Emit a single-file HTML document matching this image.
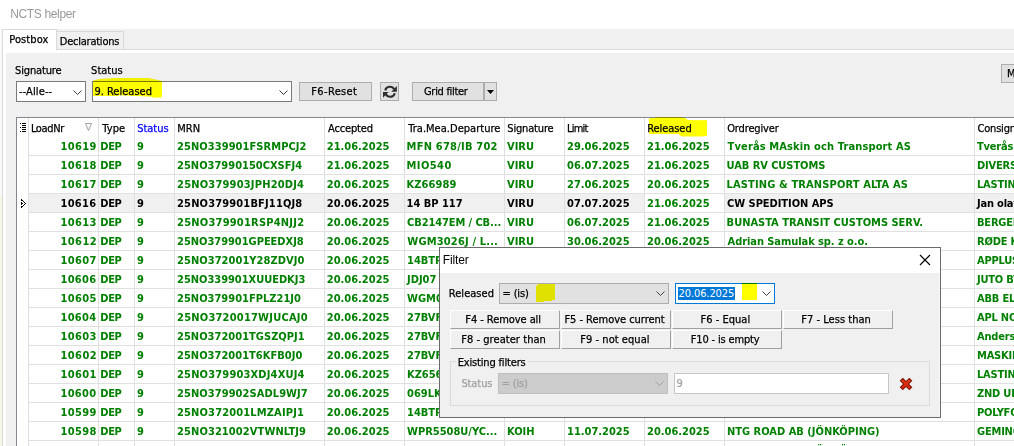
<!DOCTYPE html>
<html><head><meta charset="utf-8"><title>NCTS helper</title>
<style>
html,body{margin:0;padding:0}
body{width:1014px;height:446px;overflow:hidden;position:relative;background:#fff;font-family:"DejaVu Sans Condensed","DejaVu Sans","Liberation Sans",sans-serif;font-size:11px;font-stretch:condensed;color:#000;line-height:13px}
div,span{position:absolute;box-sizing:border-box;white-space:nowrap}
.t{height:13px;line-height:13px;-webkit-text-stroke:0.25px}
.b{font-weight:bold;-webkit-text-stroke:0}
.g{color:#008000}
.s{font-family:"Liberation Sans",sans-serif;font-size:12px;height:15px;line-height:15px;-webkit-text-stroke:0}
.hl{background:#f0f0f0}
.vline{width:1px;background:#e0e0e0}
.hline{height:1px;background:#e0e0e0}
.btn{background:#e1e1e1;border:1px solid #adadad}
.cb{background:#fff;border:1px solid #7a7a7a}
.fb{background:#f0f0f0;border-top:1px solid #fff;border-left:1px solid #fff;border-right:1px solid #a0a0a0;border-bottom:1px solid #a0a0a0}
svg{position:absolute;overflow:visible}
</style></head><body>

<div class="t s" style="left:10.20px;top:7px;letter-spacing:-0.345px;color:#999">NCTS helper</div>
<div style="left:0;top:29px;width:1014px;height:417px;background:#f0f0f0"></div>
<div style="left:0;top:29px;width:2px;height:166px;background:#fafafa"></div>
<div style="left:0;top:195px;width:2px;height:251px;background:#f6f7e8"></div>
<div style="left:2px;top:49px;width:1020px;height:400px;background:#fff;border:1px solid #d9d9d9"></div>
<div style="left:6px;top:53px;width:1010px;height:400px;background:#f0f0f0"></div>
<div style="left:56px;top:31px;width:68px;height:19px;background:#f0f0f0;border:1px solid #d9d9d9;border-left:none"></div>
<div style="left:2px;top:29px;width:55px;height:21px;background:#fff;border:1px solid #d9d9d9;border-bottom:none"></div>
<div class="t" style="left:9.25px;top:33px;letter-spacing:0.100px">Postbox</div>
<div class="t" style="left:59.75px;top:35px;letter-spacing:-0.232px">Declarations</div>
<div class="t" style="left:15.10px;top:64px;letter-spacing:-0.156px">Signature</div>
<div class="t" style="left:91.10px;top:64px;letter-spacing:0.010px">Status</div>
<div class="cb" style="left:16px;top:81px;width:70px;height:21px"></div>
<div class="t" style="left:18.95px;top:85px;letter-spacing:0.121px">--Alle--</div>
<svg style="left:73px;top:90px" width="9" height="6" viewBox="0 0 9 6"><path d="M0.5 0.5 L4.5 4.5 L8.5 0.5" fill="none" stroke="#404040" stroke-width="1"/></svg>
<div class="cb" style="left:92px;top:81px;width:200px;height:21px"></div>
<svg style="left:0;top:0;mix-blend-mode:multiply" width="300" height="120" viewBox="0 0 300 120"><path d="M93 80.4 L99.3 79.1 L115.3 78 L148.1 78 L157.9 80 L162 81.3 L162 96 L161.4 97.4 L153.4 97.8 L151.7 96.8 L119.7 95.2 L118 95.9 L93 95.9 Z" fill="#ffff00"/></svg>
<div class="t" style="left:94.40px;top:85px;letter-spacing:0.005px">9. Released</div>
<svg style="left:279px;top:90px" width="9" height="6" viewBox="0 0 9 6"><path d="M0.5 0.5 L4.5 4.5 L8.5 0.5" fill="none" stroke="#404040" stroke-width="1"/></svg>
<div class="btn" style="left:299px;top:82px;width:73px;height:19px"></div>
<div class="t" style="left:311.25px;top:85px;letter-spacing:0.364px">F6-Reset</div>
<div class="btn" style="left:380px;top:82px;width:19px;height:19px"></div>
<svg style="left:380px;top:82px" width="19" height="19" viewBox="0 0 19 19">
<path d="M5.2 8.4 A4.9 4.9 0 0 1 14.2 7.3" fill="none" stroke="#2e2e2e" stroke-width="2.1"/>
<path d="M16.9 4.0 L16.9 9.7 L11.3 9.7 Z" fill="#2e2e2e"/>
<path d="M14.8 11.2 A4.9 4.9 0 0 1 5.8 12.3" fill="none" stroke="#2e2e2e" stroke-width="2.1"/>
<path d="M3.0 10.0 L3.0 15.7 L8.6 10.0 Z" fill="#2e2e2e"/>
</svg>
<div class="btn" style="left:412px;top:82px;width:72px;height:19px"></div>
<div class="btn" style="left:484px;top:82px;width:13px;height:19px"></div>
<div class="t" style="left:424.00px;top:85px;letter-spacing:-0.300px">Grid filter</div>
<svg style="left:487px;top:90px" width="7" height="4" viewBox="0 0 7 4"><path d="M0 0 L7 0 L3.5 4 Z" fill="#000"/></svg>
<div class="btn" style="left:1001px;top:64px;width:40px;height:19px"></div>
<div class="t" style="left:1007px;top:67px">Mark</div>
<div style="left:16px;top:117px;width:1010px;height:340px;background:#fff;border:1px solid #828790"></div>
<div class="hl" style="left:29px;top:194px;width:990px;height:18px"></div>
<div style="left:645px;top:194px;width:79px;height:18px;background:#fff"></div>
<div class="vline" style="left:28px;top:118px;height:330px"></div>
<div class="vline" style="left:98px;top:118px;height:330px"></div>
<div class="vline" style="left:134px;top:118px;height:330px"></div>
<div class="vline" style="left:174px;top:118px;height:330px"></div>
<div class="vline" style="left:324px;top:118px;height:330px"></div>
<div class="vline" style="left:404px;top:118px;height:330px"></div>
<div class="vline" style="left:504px;top:118px;height:330px"></div>
<div class="vline" style="left:564px;top:118px;height:330px"></div>
<div class="vline" style="left:644px;top:118px;height:330px"></div>
<div class="vline" style="left:724px;top:118px;height:330px"></div>
<div class="vline" style="left:974px;top:118px;height:330px"></div>
<div class="hline" style="left:29px;top:155px;width:990px"></div>
<div class="hline" style="left:29px;top:174px;width:990px"></div>
<div class="hline" style="left:29px;top:193px;width:990px"></div>
<div class="hline" style="left:29px;top:212px;width:990px"></div>
<div class="hline" style="left:29px;top:231px;width:990px"></div>
<div class="hline" style="left:29px;top:250px;width:990px"></div>
<div class="hline" style="left:29px;top:269px;width:990px"></div>
<div class="hline" style="left:29px;top:288px;width:990px"></div>
<div class="hline" style="left:29px;top:307px;width:990px"></div>
<div class="hline" style="left:29px;top:326px;width:990px"></div>
<div class="hline" style="left:29px;top:345px;width:990px"></div>
<div class="hline" style="left:29px;top:364px;width:990px"></div>
<div class="hline" style="left:29px;top:383px;width:990px"></div>
<div class="hline" style="left:29px;top:402px;width:990px"></div>
<div class="hline" style="left:29px;top:421px;width:990px"></div>
<div class="hline" style="left:29px;top:440px;width:990px"></div>
<div class="hline" style="left:29px;top:459px;width:990px"></div>
<svg style="left:20px;top:123px" width="6" height="9" viewBox="0 0 6 9" shape-rendering="crispEdges"><path d="M2 0h4v1h-4zM2 2h4v1h-4zM2 4h4v1h-4zM2 6h4v1h-4zM2 8h4v1h-4zM0 0h1v1h-1zM0 4h1v1h-1zM0 8h1v1h-1z" fill="#000"/></svg>
<svg style="left:85px;top:123px" width="8" height="8" viewBox="0 0 8 8"><path d="M0.5 0.5 L6.5 0.5 L3.5 7.6 Z" fill="none" stroke="#a0a0a0" stroke-width="1"/></svg>
<svg style="left:21px;top:199px" width="5" height="9" viewBox="0 0 5 9" shape-rendering="crispEdges"><path d="M0 0h1v2h-1zM1 1h1v1h-1zM2 2h1v1h-1zM3 3h1v1h-1zM4 4h1v1h-1zM3 5h1v1h-1zM2 6h1v1h-1zM1 7h1v1h-1zM0 7h1v2h-1zM0 4h2v1h-2zM0 3h1v3h-1z" fill="#000"/></svg>
<div class="t" style="left:30.95px;top:122px;letter-spacing:-0.380px">LoadNr</div>
<div class="t" style="left:102.25px;top:122px;letter-spacing:0.133px">Type</div>
<div class="t" style="left:137.30px;top:122px;letter-spacing:-0.050px;color:#0000ff">Status</div>
<div class="t" style="left:177.25px;top:122px;letter-spacing:0.025px">MRN</div>
<div class="t" style="left:328.10px;top:122px;letter-spacing:-0.179px">Accepted</div>
<div class="t" style="left:408.25px;top:122px;letter-spacing:0.025px">Tra.Mea.Departure</div>
<div class="t" style="left:507.30px;top:122px;letter-spacing:-0.169px">Signature</div>
<div class="t" style="left:566.95px;top:122px;letter-spacing:-0.763px">Limit</div>
<svg style="left:600px;top:100px;mix-blend-mode:multiply" width="120" height="50" viewBox="600 100 120 50"><path d="M649 118.4 L659.1 116.9 L681.3 116.9 L685.2 118.2 L687 118.9 L687 120 L707 120.2 L707 135.7 L702.5 136.4 L682.1 136.4 L679.5 135.3 L679 134 L649 134 Z" fill="#ffff00"/></svg>
<div class="t" style="left:647.25px;top:122px;letter-spacing:-0.071px">Released</div>
<div class="t" style="left:727.20px;top:122px;letter-spacing:-0.144px">Ordregiver</div>
<div class="t" style="left:977.5px;top:122px;letter-spacing:-0.2px">Consignee</div>
<div class="t b g" style="left:60.40px;top:140px;letter-spacing:0.412px">10619</div>
<div class="t b g" style="left:100.30px;top:140px;letter-spacing:-0.375px">DEP</div>
<div class="t b g" style="left:137px;top:140px">9</div>
<div class="t b g" style="left:177.05px;top:140px;letter-spacing:0.071px">25NO339901FSRMPCJ2</div>
<div class="t b g" style="left:326.85px;top:140px;letter-spacing:-0.006px">21.06.2025</div>
<div class="t b g" style="left:406.60px;top:140px;letter-spacing:0.223px">MFN 678/IB 702</div>
<div class="t b g" style="left:507px;top:140px">VIRU</div>
<div class="t b g" style="left:567px;top:140px">29.06.2025</div>
<div class="t b g" style="left:647px;top:140px">21.06.2025</div>
<div class="t b g" style="left:727.60px;top:140px;letter-spacing:0.129px">Tverås MAskin och Transport AS</div>
<div class="t b g" style="left:977px;top:140px;letter-spacing:-0.2px">Tverås Maskin</div>
<div class="t b g" style="left:60.40px;top:159px;letter-spacing:0.412px">10618</div>
<div class="t b g" style="left:100.30px;top:159px;letter-spacing:-0.375px">DEP</div>
<div class="t b g" style="left:137px;top:159px">9</div>
<div class="t b g" style="left:177.05px;top:159px;letter-spacing:0.009px">25NO37990150CXSFJ4</div>
<div class="t b g" style="left:326.85px;top:159px;letter-spacing:-0.006px">21.06.2025</div>
<div class="t b g" style="left:406.60px;top:159px;letter-spacing:0.420px">MIO540</div>
<div class="t b g" style="left:507px;top:159px">VIRU</div>
<div class="t b g" style="left:567px;top:159px">06.07.2025</div>
<div class="t b g" style="left:647px;top:159px">21.06.2025</div>
<div class="t b g" style="left:726.60px;top:159px;letter-spacing:-0.069px">UAB RV CUSTOMS</div>
<div class="t b g" style="left:977px;top:159px;letter-spacing:-0.2px">DIVERSE</div>
<div class="t b g" style="left:60.40px;top:178px;letter-spacing:0.412px">10617</div>
<div class="t b g" style="left:100.30px;top:178px;letter-spacing:-0.375px">DEP</div>
<div class="t b g" style="left:137px;top:178px">9</div>
<div class="t b g" style="left:177.05px;top:178px;letter-spacing:0.200px">25NO379903JPH20DJ4</div>
<div class="t b g" style="left:326.85px;top:178px;letter-spacing:-0.006px">20.06.2025</div>
<div class="t b g" style="left:406.60px;top:178px;letter-spacing:0.075px">KZ66989</div>
<div class="t b g" style="left:507px;top:178px">VIRU</div>
<div class="t b g" style="left:567px;top:178px">27.06.2025</div>
<div class="t b g" style="left:647px;top:178px">20.06.2025</div>
<div class="t b g" style="left:726.60px;top:178px;letter-spacing:0.135px">LASTING &amp; TRANSPORT ALTA AS</div>
<div class="t b g" style="left:977px;top:178px;letter-spacing:-0.2px">LASTING</div>
<div class="t b" style="left:60.40px;top:197px;letter-spacing:0.350px">10616</div>
<div class="t b" style="left:100.30px;top:197px;letter-spacing:-0.375px">DEP</div>
<div class="t b" style="left:137px;top:197px">9</div>
<div class="t b" style="left:177.05px;top:197px;letter-spacing:0.156px">25NO379901BFJ11QJ8</div>
<div class="t b" style="left:326.85px;top:197px;letter-spacing:-0.006px">20.06.2025</div>
<div class="t b" style="left:406.60px;top:197px;letter-spacing:-0.019px">14 BP 117</div>
<div class="t b" style="left:507px;top:197px">VIRU</div>
<div class="t b" style="left:567px;top:197px">07.07.2025</div>
<div class="t b g" style="left:647px;top:197px">21.06.2025</div>
<div class="t b" style="left:727.10px;top:197px;letter-spacing:-0.053px">CW SPEDITION APS</div>
<div class="t b" style="left:977px;top:197px;letter-spacing:-0.2px">Jan olav</div>
<div class="t b g" style="left:60.40px;top:216px;letter-spacing:0.412px">10613</div>
<div class="t b g" style="left:100.30px;top:216px;letter-spacing:-0.375px">DEP</div>
<div class="t b g" style="left:137px;top:216px">9</div>
<div class="t b g" style="left:177.05px;top:216px;letter-spacing:0.224px">25NO379901RSP4NJJ2</div>
<div class="t b g" style="left:326.85px;top:216px;letter-spacing:-0.006px">20.06.2025</div>
<div class="t b g" style="left:407.10px;top:216px;letter-spacing:-0.100px">CB2147EM / CB...</div>
<div class="t b g" style="left:507px;top:216px">VIRU</div>
<div class="t b g" style="left:567px;top:216px">06.07.2025</div>
<div class="t b g" style="left:647px;top:216px">21.06.2025</div>
<div class="t b g" style="left:726.60px;top:216px;letter-spacing:-0.004px">BUNASTA TRANSIT CUSTOMS SERV.</div>
<div class="t b g" style="left:977px;top:216px;letter-spacing:-0.2px">BERGEN</div>
<div class="t b g" style="left:60.40px;top:235px;letter-spacing:0.475px">10612</div>
<div class="t b g" style="left:100.30px;top:235px;letter-spacing:-0.375px">DEP</div>
<div class="t b g" style="left:137px;top:235px">9</div>
<div class="t b g" style="left:177.05px;top:235px;letter-spacing:-0.026px">25NO379901GPEEDXJ8</div>
<div class="t b g" style="left:326.85px;top:235px;letter-spacing:-0.006px">20.06.2025</div>
<div class="t b g" style="left:407.35px;top:235px;letter-spacing:0.164px">WGM3026J / L...</div>
<div class="t b g" style="left:507px;top:235px">VIRU</div>
<div class="t b g" style="left:567px;top:235px">30.06.2025</div>
<div class="t b g" style="left:647px;top:235px">20.06.2025</div>
<div class="t b g" style="left:727.60px;top:235px;letter-spacing:-0.067px">Adrian Samulak sp. z o.o.</div>
<div class="t b g" style="left:977px;top:235px;letter-spacing:-0.2px">RØDE KORS</div>
<div class="t b g" style="left:60.40px;top:254px;letter-spacing:0.412px">10607</div>
<div class="t b g" style="left:100.30px;top:254px;letter-spacing:-0.375px">DEP</div>
<div class="t b g" style="left:137px;top:254px">9</div>
<div class="t b g" style="left:177.05px;top:254px;letter-spacing:0.053px">25NO372001Y28ZDVJ0</div>
<div class="t b g" style="left:326.85px;top:254px;letter-spacing:-0.006px">20.06.2025</div>
<div class="t b g" style="left:407px;top:254px">14BTP25 / ...</div>
<div class="t b g" style="left:507px;top:254px">VIRU</div>
<div class="t b g" style="left:567px;top:254px">30.06.2025</div>
<div class="t b g" style="left:647px;top:254px">20.06.2025</div>
<div class="t b g" style="left:977px;top:254px;letter-spacing:-0.2px">APPLUS</div>
<div class="t b g" style="left:60.40px;top:273px;letter-spacing:0.350px">10606</div>
<div class="t b g" style="left:100.30px;top:273px;letter-spacing:-0.375px">DEP</div>
<div class="t b g" style="left:137px;top:273px">9</div>
<div class="t b g" style="left:177.05px;top:273px;letter-spacing:-0.026px">25NO339901XUUEDKJ3</div>
<div class="t b g" style="left:326.85px;top:273px;letter-spacing:-0.006px">20.06.2025</div>
<div class="t b g" style="left:407px;top:273px">JDJ07 12...</div>
<div class="t b g" style="left:507px;top:273px">VIRU</div>
<div class="t b g" style="left:567px;top:273px">30.06.2025</div>
<div class="t b g" style="left:647px;top:273px">20.06.2025</div>
<div class="t b g" style="left:977px;top:273px;letter-spacing:-0.2px">JUTO BYGG</div>
<div class="t b g" style="left:60.40px;top:292px;letter-spacing:0.412px">10605</div>
<div class="t b g" style="left:100.30px;top:292px;letter-spacing:-0.375px">DEP</div>
<div class="t b g" style="left:137px;top:292px">9</div>
<div class="t b g" style="left:177.05px;top:292px;letter-spacing:0.012px">25NO379901FPLZ21J0</div>
<div class="t b g" style="left:326.85px;top:292px;letter-spacing:-0.006px">20.06.2025</div>
<div class="t b g" style="left:407px;top:292px">WGM0455...</div>
<div class="t b g" style="left:507px;top:292px">VIRU</div>
<div class="t b g" style="left:567px;top:292px">30.06.2025</div>
<div class="t b g" style="left:647px;top:292px">20.06.2025</div>
<div class="t b g" style="left:977px;top:292px;letter-spacing:-0.2px">ABB ELECTR</div>
<div class="t b g" style="left:60.40px;top:311px;letter-spacing:0.350px">10604</div>
<div class="t b g" style="left:100.30px;top:311px;letter-spacing:-0.375px">DEP</div>
<div class="t b g" style="left:137px;top:311px">9</div>
<div class="t b g" style="left:177.05px;top:311px;letter-spacing:0.218px">25NO3720017WJUCAJ0</div>
<div class="t b g" style="left:326.85px;top:311px;letter-spacing:-0.006px">20.06.2025</div>
<div class="t b g" style="left:407px;top:311px">27BVF6 / ...</div>
<div class="t b g" style="left:507px;top:311px">VIRU</div>
<div class="t b g" style="left:567px;top:311px">30.06.2025</div>
<div class="t b g" style="left:647px;top:311px">20.06.2025</div>
<div class="t b g" style="left:977px;top:311px;letter-spacing:-0.2px">APL NORWAY</div>
<div class="t b g" style="left:60.40px;top:330px;letter-spacing:0.412px">10603</div>
<div class="t b g" style="left:100.30px;top:330px;letter-spacing:-0.375px">DEP</div>
<div class="t b g" style="left:137px;top:330px">9</div>
<div class="t b g" style="left:177.05px;top:330px;letter-spacing:0.026px">25NO372001TGSZQPJ1</div>
<div class="t b g" style="left:326.85px;top:330px;letter-spacing:-0.006px">20.06.2025</div>
<div class="t b g" style="left:407px;top:330px">27BVF6 / ...</div>
<div class="t b g" style="left:507px;top:330px">VIRU</div>
<div class="t b g" style="left:567px;top:330px">30.06.2025</div>
<div class="t b g" style="left:647px;top:330px">20.06.2025</div>
<div class="t b g" style="left:977px;top:330px;letter-spacing:-0.2px">Andersen</div>
<div class="t b g" style="left:60.40px;top:349px;letter-spacing:0.475px">10602</div>
<div class="t b g" style="left:100.30px;top:349px;letter-spacing:-0.375px">DEP</div>
<div class="t b g" style="left:137px;top:349px">9</div>
<div class="t b g" style="left:177.05px;top:349px;letter-spacing:0.024px">25NO372001T6KFB0J0</div>
<div class="t b g" style="left:326.85px;top:349px;letter-spacing:-0.006px">20.06.2025</div>
<div class="t b g" style="left:407px;top:349px">27BVF6 / ...</div>
<div class="t b g" style="left:507px;top:349px">VIRU</div>
<div class="t b g" style="left:567px;top:349px">30.06.2025</div>
<div class="t b g" style="left:647px;top:349px">20.06.2025</div>
<div class="t b g" style="left:977px;top:349px;letter-spacing:-0.2px">MASKIN</div>
<div class="t b g" style="left:60.40px;top:368px;letter-spacing:0.412px">10601</div>
<div class="t b g" style="left:100.30px;top:368px;letter-spacing:-0.375px">DEP</div>
<div class="t b g" style="left:137px;top:368px">9</div>
<div class="t b g" style="left:177.05px;top:368px;letter-spacing:0.174px">25NO379903XDJ4XUJ4</div>
<div class="t b g" style="left:326.85px;top:368px;letter-spacing:-0.006px">20.06.2025</div>
<div class="t b g" style="left:407px;top:368px">KZ65689</div>
<div class="t b g" style="left:507px;top:368px">VIRU</div>
<div class="t b g" style="left:567px;top:368px">30.06.2025</div>
<div class="t b g" style="left:647px;top:368px">20.06.2025</div>
<div class="t b g" style="left:977px;top:368px;letter-spacing:-0.2px">LASTING</div>
<div class="t b g" style="left:60.40px;top:387px;letter-spacing:0.350px">10600</div>
<div class="t b g" style="left:100.30px;top:387px;letter-spacing:-0.375px">DEP</div>
<div class="t b g" style="left:137px;top:387px">9</div>
<div class="t b g" style="left:177.05px;top:387px;letter-spacing:0.071px">25NO379902SADL9WJ7</div>
<div class="t b g" style="left:326.85px;top:387px;letter-spacing:-0.006px">20.06.2025</div>
<div class="t b g" style="left:407px;top:387px">069LKB / ...</div>
<div class="t b g" style="left:507px;top:387px">VIRU</div>
<div class="t b g" style="left:567px;top:387px">30.06.2025</div>
<div class="t b g" style="left:647px;top:387px">20.06.2025</div>
<div class="t b g" style="left:977px;top:387px;letter-spacing:-0.2px">ZND UK</div>
<div class="t b g" style="left:60.40px;top:406px;letter-spacing:0.412px">10599</div>
<div class="t b g" style="left:100.30px;top:406px;letter-spacing:-0.375px">DEP</div>
<div class="t b g" style="left:137px;top:406px">9</div>
<div class="t b g" style="left:177.05px;top:406px;letter-spacing:0.150px">25NO372001LMZAIPJ1</div>
<div class="t b g" style="left:326.85px;top:406px;letter-spacing:-0.006px">20.06.2025</div>
<div class="t b g" style="left:407px;top:406px">14BTP25 / ...</div>
<div class="t b g" style="left:507px;top:406px">VIRU</div>
<div class="t b g" style="left:567px;top:406px">30.06.2025</div>
<div class="t b g" style="left:647px;top:406px">20.06.2025</div>
<div class="t b g" style="left:977px;top:406px;letter-spacing:-0.2px">POLYFORM</div>
<div class="t b g" style="left:60.40px;top:425px;letter-spacing:0.412px">10598</div>
<div class="t b g" style="left:100.30px;top:425px;letter-spacing:-0.375px">DEP</div>
<div class="t b g" style="left:137px;top:425px">9</div>
<div class="t b g" style="left:177.05px;top:425px;letter-spacing:0.097px">25NO321002VTWNLTJ9</div>
<div class="t b g" style="left:326.85px;top:425px;letter-spacing:-0.006px">20.06.2025</div>
<div class="t b g" style="left:407px;top:425px">WPR5508U/YC...</div>
<div class="t b g" style="left:507px;top:425px">KOIH</div>
<div class="t b g" style="left:567px;top:425px">11.07.2025</div>
<div class="t b g" style="left:647px;top:425px">20.06.2025</div>
<div class="t b g" style="left:727px;top:425px">NTG ROAD AB (JÖNKÖPING)</div>
<div class="t b g" style="left:977px;top:425px;letter-spacing:-0.2px">GEMINOR</div>
<div class="t b g" style="left:60.40px;top:444px;letter-spacing:0.412px">10597</div>
<div class="t b g" style="left:100.30px;top:444px;letter-spacing:-0.375px">DEP</div>
<div class="t b g" style="left:137px;top:444px">9</div>
<div class="t b g" style="left:177.05px;top:444px;letter-spacing:0.097px">25NO321002VTWNLTJ1</div>
<div class="t b g" style="left:326.85px;top:444px;letter-spacing:-0.006px">20.06.2025</div>
<div class="t b g" style="left:407px;top:444px">WPR5508U/YC...</div>
<div class="t b g" style="left:507px;top:444px">KOIH</div>
<div class="t b g" style="left:567px;top:444px">11.07.2025</div>
<div class="t b g" style="left:647px;top:444px">20.06.2025</div>
<div class="t b g" style="left:727px;top:444px">NTG ROAD AB (JÖNKÖPING)</div>
<div class="t b g" style="left:977px;top:444px;letter-spacing:-0.2px">GEMINOR</div>
<div style="left:439px;top:247px;width:502px;height:171px;background:#fff;border:1px solid #6a6a6a"></div>
<div style="left:440px;top:273px;width:499px;height:144px;background:#f0f0f0"></div>
<div style="left:939px;top:273px;width:1px;height:144px;background:#f7f7f7"></div>
<div class="t s" style="left:442.80px;top:253px;letter-spacing:-0.160px">Filter</div>
<svg style="left:920px;top:255px" width="10" height="10" viewBox="0 0 10 10"><path d="M0 0 L10 10 M10 0 L0 10" stroke="#000" stroke-width="1.1" fill="none"/></svg>
<div class="t" style="left:448.85px;top:287px;letter-spacing:0.029px">Released</div>
<div class="btn" style="left:499px;top:283px;width:170px;height:21px"></div>
<svg style="left:530px;top:280px;mix-blend-mode:multiply" width="30" height="26" viewBox="530 280 30 26"><path d="M536 286.5 L538 284 L555 284 L555 300 L552 300 L552 301 L544 301 L544 302 L536 302 Z" fill="#ffff00"/></svg>
<div class="t" style="left:502.50px;top:287px;letter-spacing:-0.150px">= (is)</div>
<svg style="left:656px;top:291px" width="9" height="6" viewBox="0 0 9 6"><path d="M0.5 0.5 L4.5 4.5 L8.5 0.5" fill="none" stroke="#404040" stroke-width="1"/></svg>
<div style="left:675px;top:283px;width:100px;height:21px;background:#fff;border:1px solid #0078d7"></div>
<div style="left:678px;top:287px;width:57px;height:13px;background:#0078d7"></div>
<div class="t" style="left:678.60px;top:287px;letter-spacing:-0.111px;color:#fff;-webkit-text-stroke:0">20.06.2025</div>
<div style="left:742px;top:283px;width:15px;height:17px;background:#ffff00;mix-blend-mode:multiply"></div>
<svg style="left:762px;top:291px" width="9" height="6" viewBox="0 0 9 6"><path d="M0.5 0.5 L4.5 4.5 L8.5 0.5" fill="none" stroke="#404040" stroke-width="1"/></svg>
<div class="fb" style="left:450px;top:310px;width:110px;height:19px"></div>
<div class="t" style="left:465.35px;top:313px;letter-spacing:-0.068px">F4 - Remove all</div>
<div class="fb" style="left:561px;top:310px;width:110px;height:19px"></div>
<div class="t" style="left:564.45px;top:313px;letter-spacing:-0.033px">F5 - Remove current</div>
<div class="fb" style="left:672px;top:310px;width:110px;height:19px"></div>
<div class="t" style="left:700.45px;top:313px;letter-spacing:0.033px">F6 - Equal</div>
<div class="fb" style="left:783px;top:310px;width:110px;height:19px"></div>
<div class="t" style="left:801.15px;top:313px;letter-spacing:0.042px">F7 - Less than</div>
<div class="fb" style="left:450px;top:330px;width:110px;height:19px"></div>
<div class="t" style="left:461.15px;top:333px;letter-spacing:0.059px">F8 - greater than</div>
<div class="fb" style="left:561px;top:330px;width:110px;height:19px"></div>
<div class="t" style="left:580.25px;top:333px;letter-spacing:0.046px">F9 - not equal</div>
<div class="fb" style="left:672px;top:330px;width:110px;height:19px"></div>
<div class="t" style="left:690.75px;top:333px;letter-spacing:-0.162px">F10 - is empty</div>
<div style="left:450px;top:361px;width:480px;height:45px;border:1px solid #dcdcdc"></div>
<div style="left:456px;top:356px;width:72px;height:13px;background:#f0f0f0"></div>
<div class="t" style="left:457.65px;top:356px;letter-spacing:-0.160px">Existing filters</div>
<div class="t" style="left:461.40px;top:377px;letter-spacing:-0.090px;color:#a0a0a0">Status</div>
<div style="left:498px;top:373px;width:170px;height:21px;background:#cccccc;border:1px solid #bfbfbf"></div>
<div class="t" style="left:501.70px;top:377px;letter-spacing:-0.190px;color:#a0a0a0">= (is)</div>
<svg style="left:655px;top:381px" width="9" height="6" viewBox="0 0 9 6"><path d="M0.5 0.5 L4.5 4.5 L8.5 0.5" fill="none" stroke="#a0a0a0" stroke-width="1"/></svg>
<div style="left:674px;top:373px;width:215px;height:21px;background:#fff;border:1px solid #c6c6c6"></div>
<div class="t" style="left:676.5px;top:377px;color:#a0a0a0">9</div>
<svg style="left:896px;top:374px" width="20" height="20" viewBox="896 374 20 20"><defs><linearGradient id="rx" x1="0" y1="0" x2="1" y2="1"><stop offset="0" stop-color="#f2541c"/><stop offset="0.5" stop-color="#e22c0c"/><stop offset="1" stop-color="#cc1c08"/></linearGradient></defs><g transform="translate(906.05 384) rotate(45)"><path d="M-6.3 -1.6 H-1.6 V-6.3 H1.6 V-1.6 H6.3 V1.6 H1.6 V6.3 H-1.6 V1.6 H-6.3 Z" fill="url(#rx)" stroke="#84160a" stroke-width="1.1" stroke-linejoin="miter"/></g></svg>
</body></html>
